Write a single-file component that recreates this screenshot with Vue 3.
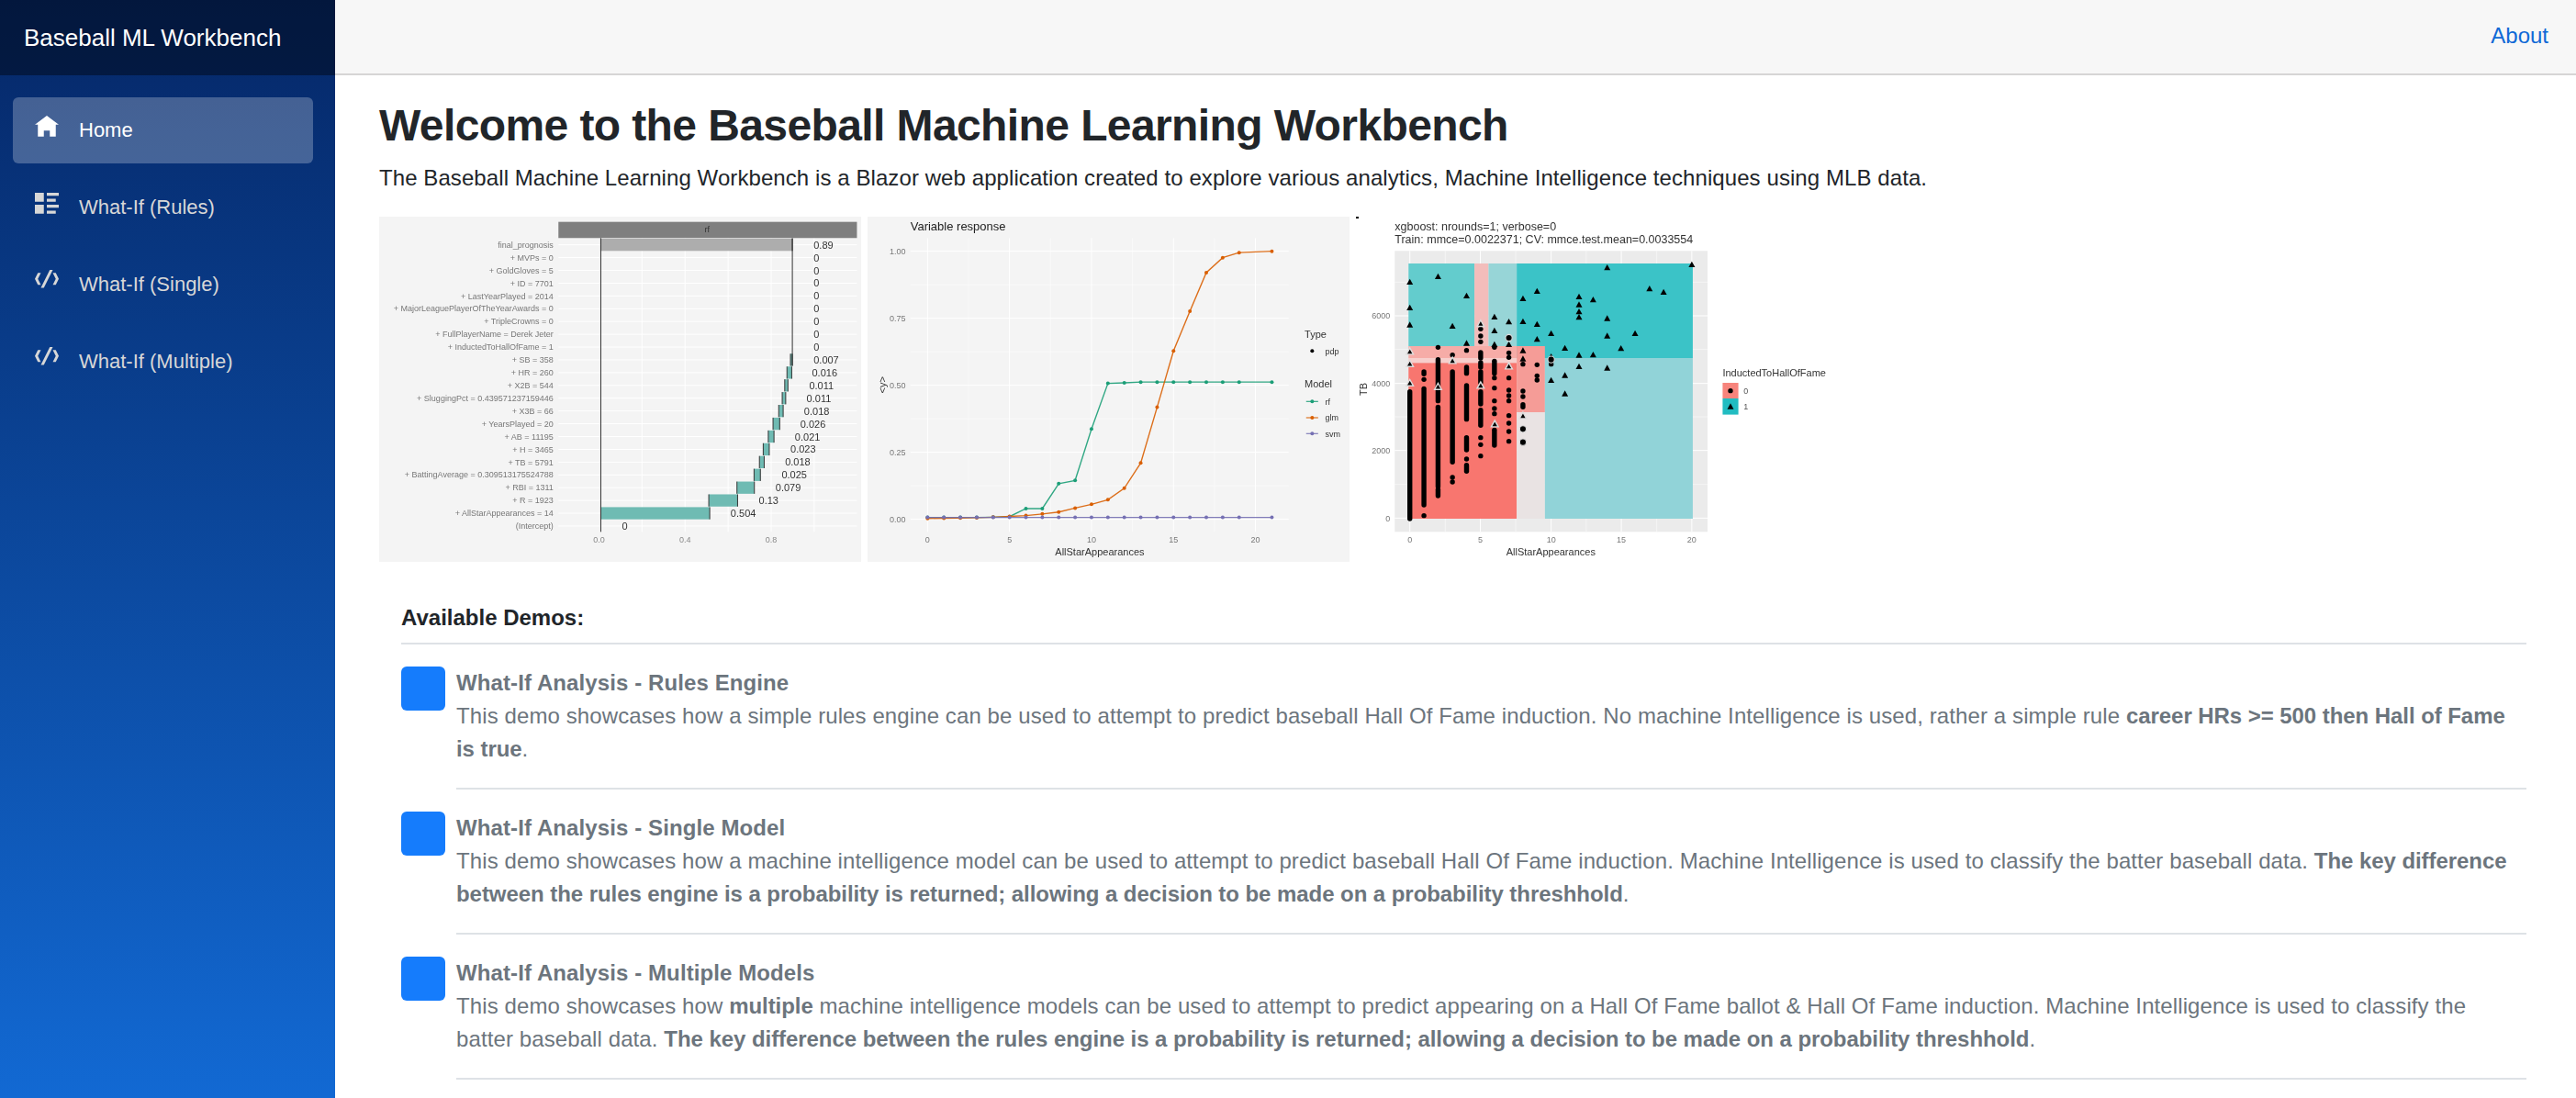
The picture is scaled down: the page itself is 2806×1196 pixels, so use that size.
<script setup>
const navItems = [
  { label: 'Home', icon: 'M4 0l-4 3h1v4h2v-2h2v2h2v-4.03l1 .03-4-3z', active: true },
  { label: 'What-If (Rules)', icon: 'M0 0v3h3v-3h-3zm4 0v1h4v-1h-4zm0 2v1h3v-1h-3zm-4 2v3h3v-3h-3zm4 0v1h4v-1h-4zm0 2v1h3v-1h-3z' },
  { label: 'What-If (Single)', icon: 'M5 0l-3 6h1l3-6h-1zm-4 1l-1 2 1 2h1l-1-2 1-2h-1zm5 0l1 2-1 2h1l1-2-1-2h-1z' },
  { label: 'What-If (Multiple)', icon: 'M5 0l-3 6h1l3-6h-1zm-4 1l-1 2 1 2h1l-1-2 1-2h-1zm5 0l1 2-1 2h1l1-2-1-2h-1z' },
]

/* ---- chart 1: waterfall ---- */
const x1 = (z) => z / 2.9 - 13
const y1 = (z) => z / 3 - 6
const rowY = (i) => 110 + i * 41.77
const wf = [
  ['final_prognosis', '0.89', 1410, 738, 1343, '#adadad'],
  ['+ MVPs = 0', '0', 1410],
  ['+ GoldGloves = 5', '0', 1410],
  ['+ ID = 7701', '0', 1410],
  ['+ LastYearPlayed = 2014', '0', 1410],
  ['+ MajorLeaguePlayerOfTheYearAwards = 0', '0', 1410],
  ['+ TripleCrowns = 0', '0', 1410],
  ['+ FullPlayerName = Derek Jeter', '0', 1410],
  ['+ InductedToHallOfFame = 1', '0', 1410],
  ['+ SB = 358', '0.007', 1410, 1337, 1343],
  ['+ HR = 260', '0.016', 1405, 1326, 1341],
  ['+ X2B = 544', '0.011', 1396, 1319, 1329],
  ['+ SluggingPct = 0.439571237159446', '0.011', 1388, 1311, 1322],
  ['+ X3B = 66', '0.018', 1380, 1300, 1314],
  ['+ YearsPlayed = 20', '0.026', 1368, 1282, 1303],
  ['+ AB = 11195', '0.021', 1351, 1267, 1285],
  ['+ H = 3465', '0.023', 1337, 1251, 1270],
  ['+ TB = 5791', '0.018', 1320, 1239, 1254],
  ['+ BattingAverage = 0.309513175524788', '0.025', 1309, 1222, 1242],
  ['+ RBI = 1311', '0.079', 1290, 1168, 1223],
  ['+ R = 1923', '0.13', 1237, 1079, 1170],
  ['+ AllStarAppearances = 14', '0.504', 1148, 738, 1082],
  ['(Intercept)', '0', 805],
].map(([label, value, vx, a, b, color], i) => {
  const cy = rowY(i)
  return {
    label, value, color: color || '#6fbbb3',
    ly: y1(cy), lvx: x1(vx), hasBar: a !== undefined,
    bx: a !== undefined ? x1(a) : 0,
    bw: a !== undefined ? (b - a) / 2.9 : 0,
    by: y1(cy - 20), bh: 13.3,
    ex: b !== undefined ? x1(b) : 0,
    sx: a !== undefined ? x1(a) : 0,
  }
})
const wfV = [868, 1004, 1140, 1276, 1412].map(x1)
const wfTicks = [['0.0', 732], ['0.4', 1004], ['0.8', 1276]].map(([t, z]) => ({ t, x: x1(z) }))

/* ---- chart 2: variable response ---- */
const x2 = (z) => z / 2.9 - 5
const y2 = (z) => z / 3 - 6
const vx = (v) => x2(204 + v * 51.8)
const vy = (v) => y2(1007 - v * 876)
const xs = [0, 1, 2, 3, 4, 5, 6, 7, 8, 9, 10, 11, 12, 13, 14, 15, 16, 17, 18, 19, 21]
const curves = [
  { color: '#1b9e77', ys: [.007, .007, .007, .007, .008, .01, .04, .04, .133, .145, .337, .507, .509, .512, .512, .512, .512, .512, .512, .512, .512] },
  { color: '#d95f02', ys: [.003, .004, .005, .006, .008, .011, .014, .02, .027, .042, .056, .073, .116, .21, .418, .628, .776, .92, .976, .995, 1] },
  { color: '#7570b3', ys: xs.map(() => .007) },
].map((c) => {
  const pts = xs.map((x, i) => ({ x: vx(x), y: vy(c.ys[i]) }))
  return { color: c.color, pts, line: pts.map((p) => `${p.x},${p.y}`).join(' ') }
})
const vMajor = [0, 5, 10, 15, 20]
const vMinor = [2.5, 7.5, 12.5, 17.5]
const hMajor = [[0, '0.00'], [.25, '0.25'], [.5, '0.50'], [.75, '0.75'], [1, '1.00']]
const hMinor = [.125, .375, .625, .875]

/* ---- chart 3: decision regions ---- */
const x3 = (z) => z / 2.8 - 10
const y3 = (z) => z / 3 - 6
const regions = [
  [208, 171, 409, 441, '#63cccd'], [409, 171, 452, 441, '#f3bdbb'], [452, 171, 538, 441, '#97d5d7'],
  [538, 171, 1075, 480, '#3bc3c7'], [208, 441, 538, 480, '#f6aca7'], [208, 480, 538, 496, '#f7cfcc'],
  [208, 496, 538, 1005, '#f8766f'], [538, 441, 624, 657, '#f59c97'], [538, 657, 624, 1005, '#e9e3e3'],
  [624, 480, 1075, 1005, '#91d3d8'],
].map(([a, b, c, d, fill]) => ({ x: x3(a), y: y3(b), w: (c - a) / 2.8, h: (d - b) / 3, fill }))
const columns = [
  [212, [[590, 1005]]],
  [255, [[525, 532], 550, [580, 960], 995]],
  [298, [445, [485, 620], [640, 900], [910, 930]]],
  [342, [470, [525, 820], 870, 885]],
  [385, [455, [510, 530], [570, 680], [740, 780], 810, [830, 850]]],
  [428, [385, 408, 427, [462, 480], [495, 510], [525, 560], [590, 630], [650, 700], 740, 763, 800]],
  [470, [445, [490, 530], 545, 578, 620, 645, 662, [715, 765]]],
  [514, [463, 478, 545, 585, 603, 620, 668, 693, 720, 752]],
  [557, [500, 588, 606, [632, 640]]],
  [600, [502, 538, 552]],
  [643, [500]],
]
const dots = []
const bars = []
columns.forEach(([x, items]) => items.forEach((it) => {
  if (Array.isArray(it)) bars.push({ x: x3(x), a: y3(it[0]), b: y3(it[1]) })
  else dots.push({ x: x3(x), y: y3(it) })
}))
const tri = (zx, zy, r) => {
  const x = x3(zx), y = y3(zy)
  return `${x - r},${y + r * .85} ${x + r},${y + r * .85} ${x},${y - r * .95}`
}
const triangles = [[212,231],[212,315],[212,371],[298,213],[385,276],[342,375],[385,431],[470,345],[470,390],[514,361],[514,435],[470,435],[557,285],[557,360],[557,455],[557,482],[600,261],[600,369],[600,418],[643,399],[643,475],[685,447],[728,279],[728,305],[728,328],[728,346],[771,289],[814,184],[814,350],[814,407],[899,399],[856,448],[771,469],[728,470],[728,507],[814,512],[685,536],[643,552],[685,596],[943,253],[986,264],[1072,174]].map(([a, b]) => tri(a, b, 3.5))
const ringedTri = [[212,458],[212,498],[212,561],[298,573],[342,488],[428,367],[428,569],[471,695],[514,506],[557,668]].map(([a, b]) => tri(a, b, 3.8))
const rings = [[514,414],[643,485],[557,712],[557,755]].map(([a, b]) => ({ x: x3(a), y: y3(b) }))
const gV = [212, 427, 643, 857, 1072].map(x3)
const gVm = [320, 535, 750, 965].map(x3)
const gH = [[1003, '0'], [782, '2000'], [563, '4000'], [342, '6000']].map(([z, t]) => ({ y: y3(z), t }))
const gHm = [893, 672, 452, 232].map(y3)
const gVlabels = [[212, '0'], [427, '5'], [643, '10'], [857, '15'], [1072, '20']].map(([z, t]) => ({ x: x3(z), t }))

const demos = [
  { title: 'What-If Analysis - Rules Engine', parts: [['This demo showcases how a simple rules engine can be used to attempt to predict baseball Hall Of Fame induction. No machine Intelligence is used, rather a simple rule ', 0], ['career HRs >= 500 then Hall of Fame\nis true', 1], ['.', 0]] },
  { title: 'What-If Analysis - Single Model', parts: [['This demo showcases how a machine intelligence model can be used to attempt to predict baseball Hall Of Fame induction. Machine Intelligence is used to classify the batter baseball data. ', 0], ['The key difference\nbetween the rules engine is a probability is returned; allowing a decision to be made on a probability threshhold', 1], ['.', 0]] },
  { title: 'What-If Analysis - Multiple Models', parts: [['This demo showcases how ', 0], ['multiple', 1], [' machine intelligence models can be used to attempt to predict appearing on a Hall Of Fame ballot & Hall Of Fame induction. Machine Intelligence is used to classify the\nbatter baseball data. ', 0], ['The key difference between the rules engine is a probability is returned; allowing a decision to be made on a probability threshhold', 1], ['.', 0]] },
]
</script>

<template>
  <div class="page">
    <aside class="sidebar">
      <div class="brand">Baseball ML Workbench</div>
      <nav class="nav">
        <a v-for="item in navItems" :key="item.label" class="nav-link" :class="{ active: item.active }">
          <svg class="nav-icon" viewBox="0 0 8 8"><path :d="item.icon" /></svg>
          <span>{{ item.label }}</span>
        </a>
      </nav>
    </aside>

    <div class="main">
      <header class="topbar"><a class="about">About</a></header>
      <main class="content">
        <h1>Welcome to the Baseball Machine Learning Workbench</h1>
        <p class="intro">The Baseball Machine Learning Workbench is a Blazor web application created to explore various analytics, Machine Intelligence techniques using MLB data.</p>

        <div class="charts">
          <svg class="chart plain" width="525" height="376">
            <line v-for="x in wfV" :key="x" :x1="x" :x2="x" :y1="y1(88)" :y2="y1(1048)" stroke="#fff" />
            <line v-for="r in wf" :key="'g' + r.label" :x1="x1(604)" :x2="x1(1547)" :y1="r.ly" :y2="r.ly" stroke="#fff" />
            <rect :x="x1(604)" :y="y1(35)" :width="943 / 2.9" :height="17.6" fill="#7f7f7f" />
            <text :x="x1(1074)" :y="y1(68)" class="t9 mid" fill="#333">rf</text>
            <template v-for="r in wf" :key="r.label">
              <rect v-if="r.hasBar" :x="r.bx" :y="r.by" :width="r.bw" :height="r.bh" :fill="r.color" />
              <line v-if="r.hasBar" :x1="r.sx" :x2="r.sx" :y1="r.by" :y2="r.by + r.bh" stroke="#333" />
              <line v-if="r.hasBar" :x1="r.ex" :x2="r.ex" :y1="r.by" :y2="r.by + r.bh" stroke="#333" />
              <text :x="x1(588)" :y="r.ly + 3.2" class="t9 end" fill="#777">{{ r.label }}</text>
              <text :x="r.lvx" :y="r.ly + 4" class="t11" fill="#333">{{ r.value }}</text>
            </template>
            <line :x1="x1(738)" :x2="x1(738)" :y1="y1(88)" :y2="y1(1048)" stroke="#333" />
            <line :x1="x1(1343)" :x2="x1(1343)" :y1="y1(88)" :y2="y1(505)" stroke="#333" />
            <text v-for="t in wfTicks" :key="t.t" :x="t.x" :y="y1(1082)" class="t9 mid" fill="#888">{{ t.t }}</text>
          </svg>

          <svg class="chart plain" width="525" height="376">
            <line v-for="v in vMinor" :key="'a' + v" :x1="vx(v)" :x2="vx(v)" :y1="y2(88)" :y2="y2(1048)" stroke="#fff" stroke-width=".5" />
            <line v-for="v in hMinor" :key="'b' + v" :x1="x2(150)" :x2="x2(1345)" :y1="vy(v)" :y2="vy(v)" stroke="#fff" stroke-width=".5" />
            <line v-for="v in vMajor" :key="'c' + v" :x1="vx(v)" :x2="vx(v)" :y1="y2(88)" :y2="y2(1048)" stroke="#fff" />
            <line v-for="h in hMajor" :key="'d' + h[0]" :x1="x2(150)" :x2="x2(1345)" :y1="vy(h[0])" :y2="vy(h[0])" stroke="#fff" />
            <g v-for="c in curves" :key="c.color">
              <polyline :points="c.line" fill="none" :stroke="c.color" stroke-width="1.4" opacity=".9" />
              <circle v-for="(p, i) in c.pts" :key="i" :cx="p.x" :cy="p.y" r="2" :fill="c.color" />
            </g>
            <text :x="x2(150)" :y="y2(62)" class="t13" fill="#222">Variable response</text>
            <text v-for="h in hMajor" :key="'e' + h[0]" :x="x2(135)" :y="vy(h[0]) + 3.4" class="t9 end" fill="#777">{{ h[1] }}</text>
            <text v-for="v in vMajor" :key="'f' + v" :x="vx(v)" :y="y2(1082)" class="t9 mid" fill="#777">{{ v }}</text>
            <text :x="x2(748)" :y="y2(1124)" class="t11 mid" fill="#333">AllStarAppearances</text>
            <text class="t11 mid" fill="#333" :transform="`translate(${x2(72)},${y2(568)}) rotate(-90)`">&lt;y&gt;</text>
            <text :x="x2(1395)" :y="y2(413)" class="t11" fill="#333">Type</text>
            <circle :cx="x2(1419)" :cy="y2(457)" r="2" fill="#000" />
            <text :x="x2(1460)" :y="y2(467)" class="t9" fill="#333">pdp</text>
            <text :x="x2(1395)" :y="y2(577)" class="t11" fill="#333">Model</text>
            <g v-for="(l, i) in [['rf', '#1b9e77', 622], ['glm', '#d95f02', 675], ['svm', '#7570b3', 727]]" :key="i">
              <line :x1="x2(1400)" :x2="x2(1438)" :y1="y2(l[2])" :y2="y2(l[2])" :stroke="l[1]" stroke-width="1.3" opacity=".8" />
              <circle :cx="x2(1419)" :cy="y2(l[2])" r="2" :fill="l[1]" />
              <text :x="x2(1460)" :y="y2(l[2] + 10)" class="t9" fill="#333">{{ l[0] }}</text>
            </g>
          </svg>

          <svg class="chart" width="590" height="376">
            <rect x="7" y="0" width="3" height="2" fill="#000" />
            <text :x="x3(166)" :y="y3(62)" class="t125" fill="#333">xgboost: nrounds=1; verbose=0</text>
            <text :x="x3(166)" :y="y3(104)" class="t125" fill="#333">Train: mmce=0.0022371; CV: mmce.test.mean=0.0033554</text>
            <rect :x="x3(166)" :y="y3(130)" :width="954 / 2.8" :height="306" fill="#ebebeb" />
            <line v-for="x in gVm" :key="'m' + x" :x1="x" :x2="x" :y1="y3(130)" :y2="y3(1048)" stroke="#fff" stroke-width=".5" />
            <line v-for="y in gHm" :key="'n' + y" :x1="x3(166)" :x2="x3(1120)" :y1="y" :y2="y" stroke="#fff" stroke-width=".5" />
            <line v-for="x in gV" :key="'o' + x" :x1="x" :x2="x" :y1="y3(130)" :y2="y3(1048)" stroke="#fff" />
            <line v-for="g in gH" :key="'p' + g.t" :x1="x3(166)" :x2="x3(1120)" :y1="g.y" :y2="g.y" stroke="#fff" />
            <rect v-for="(r, i) in regions" :key="'r' + i" :x="r.x" :y="r.y" :width="r.w" :height="r.h" :fill="r.fill" />
            <line v-for="(b, i) in bars" :key="'s' + i" :x1="b.x" :x2="b.x" :y1="b.a" :y2="b.b" stroke="#000" stroke-width="5.4" stroke-linecap="round" />
            <circle v-for="(d, i) in dots" :key="'t' + i" :cx="d.x" :cy="d.y" r="2.7" fill="#000" />
            <polygon v-for="(t, i) in ringedTri" :key="'u' + i" :points="t" fill="#000" stroke="#ddd" stroke-width="1.4" />
            <polygon v-for="(t, i) in triangles" :key="'v' + i" :points="t" fill="#000" />
            <g v-for="(r, i) in rings" :key="'w' + i">
              <circle :cx="r.x" :cy="r.y" r="3.6" fill="#000" stroke="#ddd" stroke-width="1.1" />
              <circle :cx="r.x" :cy="r.y" r="2" fill="#000" />
            </g>
            <text v-for="g in gH" :key="'x' + g.t" :x="x3(152)" :y="g.y + 3.2" class="t9 end" fill="#777">{{ g.t }}</text>
            <text v-for="g in gVlabels" :key="'y' + g.t" :x="g.x" :y="y3(1082)" class="t9 mid" fill="#777">{{ g.t }}</text>
            <text :x="x3(642)" :y="y3(1124)" class="t11 mid" fill="#333">AllStarAppearances</text>
            <text class="t11 mid" fill="#333" :transform="`translate(${x3(80)},${y3(582)}) rotate(-90)`">TB</text>
            <text :x="x3(1166)" :y="y3(541)" class="t11" fill="#333">InductedToHallOfFame</text>
            <rect :x="x3(1166)" :y="y3(561)" :width="48 / 2.8" :height="17" fill="#f7847c" />
            <rect :x="x3(1166)" :y="y3(612)" :width="48 / 2.8" :height="17.6" fill="#21bcc1" />
            <circle :cx="x3(1190)" :cy="y3(587)" r="2.7" fill="#000" />
            <polygon :points="tri(1190, 638, 3.5)" fill="#000" />
            <text :x="x3(1230)" :y="y3(597)" class="t9" fill="#555">0</text>
            <text :x="x3(1230)" :y="y3(649)" class="t9" fill="#555">1</text>
          </svg>
        </div>

        <section class="demos">
          <h5>Available Demos:</h5>
          <hr class="rule" />
          <div v-for="d in demos" :key="d.title" class="demo">
            <div class="badge"></div>
            <div class="demo-body">
              <strong class="demo-title">{{ d.title }}</strong>
              <p><template v-for="(p, i) in d.parts" :key="i"><b v-if="p[1]">{{ p[0] }}</b><template v-else>{{ p[0] }}</template></template></p>
            </div>
          </div>
        </section>
      </main>
    </div>
  </div>
</template>

<style>
html, body { margin: 0; background: #fff; }
</style>

<style scoped>
.page {
  display: flex;
  height: 1196px;
  overflow: hidden;
  font-family: "Liberation Sans", Arial, sans-serif;
  color: #212529;
}
.sidebar {
  width: 365px;
  flex: none;
  background: linear-gradient(180deg, rgb(5, 39, 103), #1269d3);
}
.brand {
  height: 82px;
  box-sizing: border-box;
  padding: 0 0 0 26px;
  display: flex;
  align-items: center;
  background: rgba(0, 0, 0, .4);
  color: #fff;
  font-size: 26px;
}
.nav {
  display: flex;
  flex-direction: column;
  gap: 12px;
  padding: 24px 24px 0 14px;
}
.nav-link {
  height: 72px;
  display: flex;
  align-items: center;
  gap: 22px;
  padding-left: 24px;
  border-radius: 6px;
  color: #d7d7d7;
  font-size: 22px;
}
.nav-link.active {
  background: rgba(255, 255, 255, .25);
  color: #fff;
}
.nav-icon {
  width: 26px;
  height: 26px;
  flex: none;
  fill: currentColor;
  margin-top: -7px;
}
.main {
  flex: 1;
  min-width: 0;
}
.topbar {
  height: 82px;
  box-sizing: border-box;
  background: #f7f7f7;
  border-bottom: 2px solid #d6d5d5;
  display: flex;
  align-items: center;
  justify-content: flex-end;
  padding: 0 30px 2px 0;
}
.about {
  color: #0f69d6;
  font-size: 24px;
}
.content {
  padding: 25px 54px 0 48px;
}
h1 {
  margin: 0 0 9px;
  font-size: 48px;
  letter-spacing: -.6px;
  line-height: 60px;
  font-weight: 700;
}
.intro {
  margin: 0 0 24px;
  font-size: 24px;
  letter-spacing: .08px;
  line-height: 36px;
}
.charts {
  display: flex;
  gap: 7px;
  height: 376px;
}
.chart {
  flex: none;
  display: block;
  filter: blur(.45px);
}
.chart.plain { background: #f4f4f4; }
.chart:last-child { margin-left: -7px; }
.chart text { font-family: "Liberation Sans", Arial, sans-serif; }
.t9 { font-size: 9px; }
.t11 { font-size: 11px; }
.t125 { font-size: 12.5px; }
.t13 { font-size: 13px; }
.mid { text-anchor: middle; }
.end { text-anchor: end; }
.demos {
  padding: 43px 0 0 24px;
}
h5 {
  margin: 0;
  font-size: 24px;
  line-height: 36px;
  font-weight: 700;
}
.rule {
  border: 0;
  border-top: 2px solid #dee2e6;
  margin: 9px 0 0;
}
.demo {
  display: flex;
  gap: 12px;
  padding-top: 24px;
}
.badge {
  width: 48px;
  height: 48px;
  flex: none;
  border-radius: 6px;
  background: #157cfc;
}
.demo-body {
  flex: 1;
  min-width: 0;
  border-bottom: 2px solid #dee2e6;
  padding-bottom: 24px;
  color: #6c757d;
  font-size: 24px;
  letter-spacing: .1px;
  line-height: 36px;
}
.demo-title {
  display: block;
}
.demo-body p {
  margin: 0;
  white-space: pre-line;
}
.demo-body b {
  letter-spacing: -.06px;
}
</style>
